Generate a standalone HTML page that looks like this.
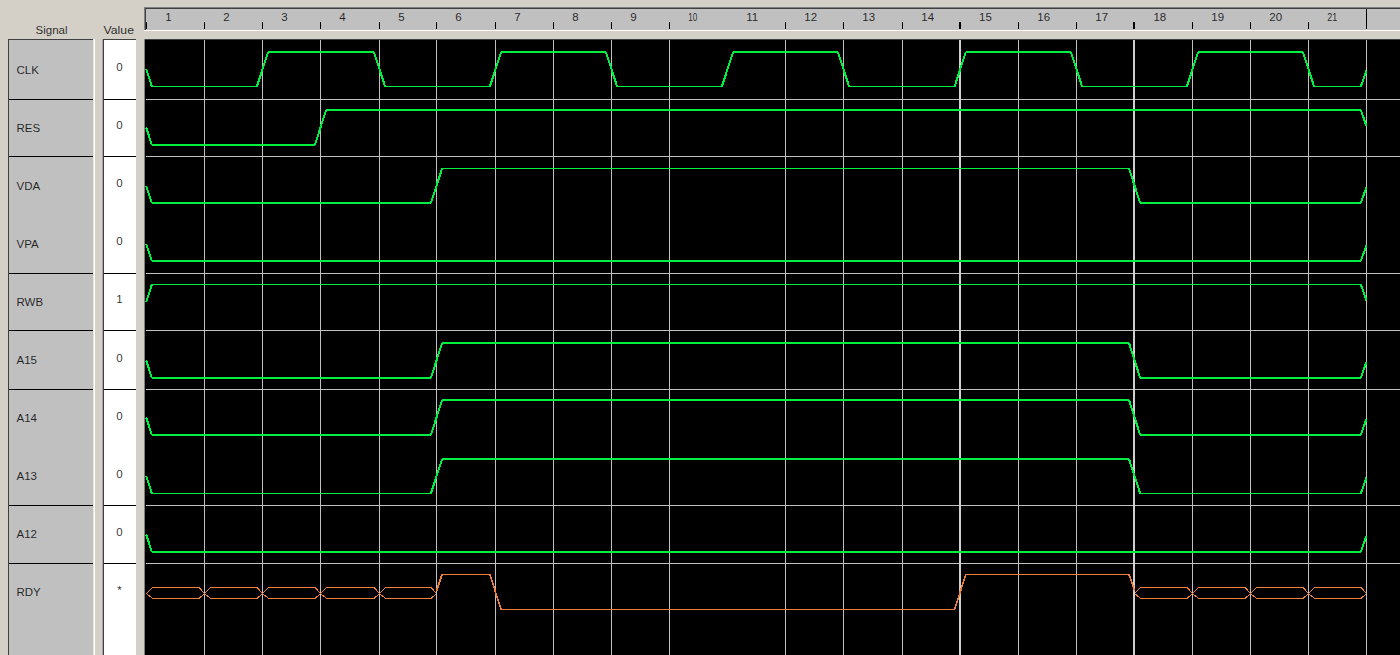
<!DOCTYPE html>
<html><head><meta charset="utf-8"><title>Waveform</title>
<style>
html,body{margin:0;padding:0;background:#d4d0c8;overflow:hidden}
svg{display:block}
text{font-family:"Liberation Sans",sans-serif;font-size:11.5px;fill:#000;fill-opacity:.82}
</style></head><body>
<svg width="1400" height="655" viewBox="0 0 1400 655">
<g shape-rendering="crispEdges">
<rect x="0" y="0" width="1400" height="655" fill="#d4d0c8"/>
<rect x="8" y="39" width="86" height="616" fill="#404040"/>
<rect x="9" y="40" width="84" height="615" fill="#c0c0c0"/>
<rect x="93" y="39" width="1" height="616" fill="#e8e6e0"/>
<rect x="94" y="39" width="1" height="616" fill="#ffffff"/>
<rect x="102" y="39" width="1" height="616" fill="#a8a49e"/>
<rect x="103" y="39" width="33" height="616" fill="#404040"/>
<rect x="104" y="40" width="32" height="615" fill="#ffffff"/>
<rect x="144" y="7" width="1256" height="1" fill="#808080"/>
<rect x="144" y="8" width="1256" height="1" fill="#404040"/>
<rect x="144" y="9" width="1256" height="21" fill="#c0c0c0"/>
<rect x="144" y="7" width="1" height="23" fill="#808080"/>
<rect x="145" y="8" width="1" height="22" fill="#404040"/>
<rect x="144" y="30" width="1256" height="1" fill="#ffffff"/>
<rect x="144" y="39" width="1256" height="616" fill="#808080"/>
<rect x="145" y="40" width="1255" height="615" fill="#000000"/>
<rect x="145" y="39" width="1255" height="1" fill="#404040"/>
<rect x="9" y="99" width="84" height="1" fill="#000000"/>
<rect x="104" y="99" width="32" height="1" fill="#000000"/>
<rect x="146" y="99" width="1254" height="1" fill="#c0c0c0"/>
<rect x="9" y="156" width="84" height="1" fill="#000000"/>
<rect x="104" y="156" width="32" height="1" fill="#000000"/>
<rect x="146" y="156" width="1254" height="1" fill="#c0c0c0"/>
<rect x="9" y="273" width="84" height="1" fill="#000000"/>
<rect x="104" y="273" width="32" height="1" fill="#000000"/>
<rect x="146" y="273" width="1254" height="1" fill="#c0c0c0"/>
<rect x="9" y="330" width="84" height="1" fill="#000000"/>
<rect x="104" y="330" width="32" height="1" fill="#000000"/>
<rect x="146" y="330" width="1254" height="1" fill="#c0c0c0"/>
<rect x="9" y="389" width="84" height="1" fill="#000000"/>
<rect x="104" y="389" width="32" height="1" fill="#000000"/>
<rect x="146" y="389" width="1254" height="1" fill="#c0c0c0"/>
<rect x="9" y="505" width="84" height="1" fill="#000000"/>
<rect x="104" y="505" width="32" height="1" fill="#000000"/>
<rect x="146" y="505" width="1254" height="1" fill="#c0c0c0"/>
<rect x="9" y="563" width="84" height="1" fill="#000000"/>
<rect x="104" y="563" width="32" height="1" fill="#000000"/>
<rect x="146" y="563" width="1254" height="1" fill="#c0c0c0"/>
<rect x="146" y="22" width="1" height="7" fill="#000000"/>
<rect x="204" y="40" width="1" height="615" fill="#c0c0c0"/>
<rect x="204" y="22" width="1" height="7" fill="#000000"/>
<rect x="262" y="40" width="1" height="615" fill="#c0c0c0"/>
<rect x="262" y="22" width="1" height="7" fill="#000000"/>
<rect x="320" y="40" width="1" height="615" fill="#c0c0c0"/>
<rect x="320" y="22" width="1" height="7" fill="#000000"/>
<rect x="379" y="40" width="1" height="615" fill="#c0c0c0"/>
<rect x="379" y="22" width="1" height="7" fill="#000000"/>
<rect x="436" y="40" width="1" height="615" fill="#c0c0c0"/>
<rect x="436" y="22" width="1" height="7" fill="#000000"/>
<rect x="495" y="40" width="1" height="615" fill="#c0c0c0"/>
<rect x="495" y="22" width="1" height="7" fill="#000000"/>
<rect x="553" y="40" width="1" height="615" fill="#c0c0c0"/>
<rect x="553" y="22" width="1" height="7" fill="#000000"/>
<rect x="611" y="40" width="1" height="615" fill="#c0c0c0"/>
<rect x="611" y="22" width="1" height="7" fill="#000000"/>
<rect x="669" y="40" width="1" height="615" fill="#c0c0c0"/>
<rect x="669" y="22" width="1" height="7" fill="#000000"/>
<rect x="785" y="40" width="1" height="615" fill="#c0c0c0"/>
<rect x="785" y="22" width="1" height="7" fill="#000000"/>
<rect x="843" y="40" width="1" height="615" fill="#c0c0c0"/>
<rect x="843" y="22" width="1" height="7" fill="#000000"/>
<rect x="902" y="40" width="1" height="615" fill="#c0c0c0"/>
<rect x="902" y="22" width="1" height="7" fill="#000000"/>
<rect x="959" y="40" width="2" height="615" fill="#d0d0d0"/>
<rect x="959" y="22" width="2" height="7" fill="#000000"/>
<rect x="1018" y="40" width="1" height="615" fill="#c0c0c0"/>
<rect x="1018" y="22" width="1" height="7" fill="#000000"/>
<rect x="1076" y="40" width="1" height="615" fill="#c0c0c0"/>
<rect x="1076" y="22" width="1" height="7" fill="#000000"/>
<rect x="1133" y="40" width="2" height="615" fill="#d0d0d0"/>
<rect x="1133" y="22" width="2" height="7" fill="#000000"/>
<rect x="1192" y="40" width="1" height="615" fill="#c0c0c0"/>
<rect x="1192" y="22" width="1" height="7" fill="#000000"/>
<rect x="1250" y="40" width="1" height="615" fill="#c0c0c0"/>
<rect x="1250" y="22" width="1" height="7" fill="#000000"/>
<rect x="1308" y="40" width="1" height="615" fill="#c0c0c0"/>
<rect x="1308" y="22" width="1" height="7" fill="#000000"/>
<rect x="1366" y="40" width="1" height="615" fill="#c0c0c0"/>
<rect x="1366" y="9" width="1" height="20" fill="#000000"/>
</g>
<g shape-rendering="crispEdges">
<line x1="146.2" y1="69.25" x2="151.9" y2="86.5" stroke="#00f040" stroke-width="2" stroke-linecap="butt"/>
<rect x="151.9" y="86" width="105" height="1" fill="#00f040"/>
<line x1="256.9" y1="86.5" x2="268.1" y2="52" stroke="#00f040" stroke-width="2" stroke-linecap="butt"/>
<rect x="268.1" y="51" width="105.8" height="2" fill="#00f040"/>
<line x1="373.9" y1="52" x2="385.1" y2="86.5" stroke="#00f040" stroke-width="2" stroke-linecap="butt"/>
<rect x="385.1" y="86" width="104.8" height="1" fill="#00f040"/>
<line x1="489.9" y1="86.5" x2="501.1" y2="52" stroke="#00f040" stroke-width="2" stroke-linecap="butt"/>
<rect x="501.1" y="51" width="104.8" height="2" fill="#00f040"/>
<line x1="605.9" y1="52" x2="617.1" y2="86.5" stroke="#00f040" stroke-width="2" stroke-linecap="butt"/>
<rect x="617.1" y="86" width="104.8" height="1" fill="#00f040"/>
<line x1="721.9" y1="86.5" x2="733.1" y2="52" stroke="#00f040" stroke-width="2" stroke-linecap="butt"/>
<rect x="733.1" y="51" width="104.8" height="2" fill="#00f040"/>
<line x1="837.9" y1="52" x2="849.1" y2="86.5" stroke="#00f040" stroke-width="2" stroke-linecap="butt"/>
<rect x="849.1" y="86" width="105.5" height="1" fill="#00f040"/>
<line x1="954.6" y1="86.5" x2="965.8" y2="52" stroke="#00f040" stroke-width="2" stroke-linecap="butt"/>
<rect x="965.8" y="51" width="105.1" height="2" fill="#00f040"/>
<line x1="1070.9" y1="52" x2="1082.1" y2="86.5" stroke="#00f040" stroke-width="2" stroke-linecap="butt"/>
<rect x="1082.1" y="86" width="104.8" height="1" fill="#00f040"/>
<line x1="1186.9" y1="86.5" x2="1198.1" y2="52" stroke="#00f040" stroke-width="2" stroke-linecap="butt"/>
<rect x="1198.1" y="51" width="104.8" height="2" fill="#00f040"/>
<line x1="1302.9" y1="52" x2="1314.1" y2="86.5" stroke="#00f040" stroke-width="2" stroke-linecap="butt"/>
<rect x="1314.1" y="86" width="46.7" height="1" fill="#00f040"/>
<line x1="1360.8" y1="86.5" x2="1366.5" y2="70.63" stroke="#00f040" stroke-width="2" stroke-linecap="butt"/>
<line x1="146.2" y1="127.5" x2="151.9" y2="145" stroke="#00f040" stroke-width="2" stroke-linecap="butt"/>
<rect x="151.9" y="144" width="163" height="2" fill="#00f040"/>
<line x1="314.9" y1="145" x2="326.1" y2="110" stroke="#00f040" stroke-width="2" stroke-linecap="butt"/>
<rect x="326.1" y="109" width="1034.7" height="2" fill="#00f040"/>
<line x1="1360.8" y1="110" x2="1366.5" y2="126.1" stroke="#00f040" stroke-width="2" stroke-linecap="butt"/>
<line x1="146.2" y1="185.75" x2="151.9" y2="203" stroke="#00f040" stroke-width="2" stroke-linecap="butt"/>
<rect x="151.9" y="202" width="279" height="2" fill="#00f040"/>
<line x1="430.9" y1="203" x2="442.1" y2="168.5" stroke="#00f040" stroke-width="2" stroke-linecap="butt"/>
<rect x="442.1" y="168" width="686.9" height="1" fill="#00f040"/>
<line x1="1129" y1="168.5" x2="1140.2" y2="203" stroke="#00f040" stroke-width="2" stroke-linecap="butt"/>
<rect x="1140.2" y="202" width="220.6" height="2" fill="#00f040"/>
<line x1="1360.8" y1="203" x2="1366.5" y2="187.13" stroke="#00f040" stroke-width="2" stroke-linecap="butt"/>
<line x1="146.2" y1="244" x2="151.9" y2="261" stroke="#00f040" stroke-width="2" stroke-linecap="butt"/>
<rect x="151.9" y="260" width="1208.9" height="2" fill="#00f040"/>
<line x1="1360.8" y1="261" x2="1366.5" y2="245.36" stroke="#00f040" stroke-width="2" stroke-linecap="butt"/>
<line x1="146.2" y1="301.75" x2="151.9" y2="284.5" stroke="#00f040" stroke-width="2" stroke-linecap="butt"/>
<rect x="151.9" y="284" width="1208.9" height="1" fill="#00f040"/>
<line x1="1360.8" y1="284.5" x2="1366.5" y2="300.37" stroke="#00f040" stroke-width="2" stroke-linecap="butt"/>
<line x1="146.2" y1="360.5" x2="151.9" y2="378" stroke="#00f040" stroke-width="2" stroke-linecap="butt"/>
<rect x="151.9" y="377" width="279" height="2" fill="#00f040"/>
<line x1="430.9" y1="378" x2="442.1" y2="343" stroke="#00f040" stroke-width="2" stroke-linecap="butt"/>
<rect x="442.1" y="342" width="686.9" height="2" fill="#00f040"/>
<line x1="1129" y1="343" x2="1140.2" y2="378" stroke="#00f040" stroke-width="2" stroke-linecap="butt"/>
<rect x="1140.2" y="377" width="220.6" height="2" fill="#00f040"/>
<line x1="1360.8" y1="378" x2="1366.5" y2="361.9" stroke="#00f040" stroke-width="2" stroke-linecap="butt"/>
<line x1="146.2" y1="417.5" x2="151.9" y2="435" stroke="#00f040" stroke-width="2" stroke-linecap="butt"/>
<rect x="151.9" y="434" width="279" height="2" fill="#00f040"/>
<line x1="430.9" y1="435" x2="442.1" y2="400" stroke="#00f040" stroke-width="2" stroke-linecap="butt"/>
<rect x="442.1" y="399" width="686.9" height="2" fill="#00f040"/>
<line x1="1129" y1="400" x2="1140.2" y2="435" stroke="#00f040" stroke-width="2" stroke-linecap="butt"/>
<rect x="1140.2" y="434" width="220.6" height="2" fill="#00f040"/>
<line x1="1360.8" y1="435" x2="1366.5" y2="418.9" stroke="#00f040" stroke-width="2" stroke-linecap="butt"/>
<line x1="146.2" y1="476.25" x2="151.9" y2="493.5" stroke="#00f040" stroke-width="2" stroke-linecap="butt"/>
<rect x="151.9" y="493" width="279" height="1" fill="#00f040"/>
<line x1="430.9" y1="493.5" x2="442.1" y2="459" stroke="#00f040" stroke-width="2" stroke-linecap="butt"/>
<rect x="442.1" y="458" width="686.9" height="2" fill="#00f040"/>
<line x1="1129" y1="459" x2="1140.2" y2="493.5" stroke="#00f040" stroke-width="2" stroke-linecap="butt"/>
<rect x="1140.2" y="493" width="220.6" height="1" fill="#00f040"/>
<line x1="1360.8" y1="493.5" x2="1366.5" y2="477.63" stroke="#00f040" stroke-width="2" stroke-linecap="butt"/>
<line x1="146.2" y1="534.5" x2="151.9" y2="552" stroke="#00f040" stroke-width="2" stroke-linecap="butt"/>
<rect x="151.9" y="551" width="1208.9" height="2" fill="#00f040"/>
<line x1="1360.8" y1="552" x2="1366.5" y2="535.9" stroke="#00f040" stroke-width="2" stroke-linecap="butt"/>
<polyline fill="none" stroke="#f08038" stroke-width="1" points="146.5,593.5 152.5,587.5 199,587.5 204.5,593.5"/>
<polyline fill="none" stroke="#f08038" stroke-width="1" points="146.5,593.5 152.5,598.5 199,598.5 204.5,593.5"/>
<polyline fill="none" stroke="#f08038" stroke-width="1" points="204.5,593.5 210.5,587.5 257,587.5 262.5,593.5"/>
<polyline fill="none" stroke="#f08038" stroke-width="1" points="204.5,593.5 210.5,598.5 257,598.5 262.5,593.5"/>
<polyline fill="none" stroke="#f08038" stroke-width="1" points="262.5,593.5 268.5,587.5 315,587.5 320.5,593.5"/>
<polyline fill="none" stroke="#f08038" stroke-width="1" points="262.5,593.5 268.5,598.5 315,598.5 320.5,593.5"/>
<polyline fill="none" stroke="#f08038" stroke-width="1" points="320.5,593.5 326.5,587.5 374,587.5 379.5,593.5"/>
<polyline fill="none" stroke="#f08038" stroke-width="1" points="320.5,593.5 326.5,598.5 374,598.5 379.5,593.5"/>
<polyline fill="none" stroke="#f08038" stroke-width="1" points="379.5,593.5 385.5,587.5 431,587.5 436.5,593.5"/>
<polyline fill="none" stroke="#f08038" stroke-width="1" points="379.5,593.5 385.5,598.5 431,598.5 436.5,593.5"/>
<line x1="436.5" y1="591" x2="442" y2="574.5" stroke="#f08038" stroke-width="1.6" stroke-linecap="butt"/>
<rect x="442" y="574" width="47.9" height="1" fill="#f08038"/>
<line x1="489.9" y1="574.5" x2="501.1" y2="609.5" stroke="#f08038" stroke-width="1.6" stroke-linecap="butt"/>
<rect x="501.1" y="609" width="453.5" height="1" fill="#f08038"/>
<line x1="954.6" y1="609.5" x2="965.8" y2="574.5" stroke="#f08038" stroke-width="1.6" stroke-linecap="butt"/>
<rect x="965.8" y="574" width="163.2" height="1" fill="#f08038"/>
<line x1="1129" y1="574.5" x2="1134.6" y2="591" stroke="#f08038" stroke-width="1.6" stroke-linecap="butt"/>
<polyline fill="none" stroke="#f08038" stroke-width="1" points="1134.6,593.5 1140.6,587.5 1187,587.5 1192.5,593.5"/>
<polyline fill="none" stroke="#f08038" stroke-width="1" points="1134.6,593.5 1140.6,598.5 1187,598.5 1192.5,593.5"/>
<polyline fill="none" stroke="#f08038" stroke-width="1" points="1192.5,593.5 1198.5,587.5 1245,587.5 1250.5,593.5"/>
<polyline fill="none" stroke="#f08038" stroke-width="1" points="1192.5,593.5 1198.5,598.5 1245,598.5 1250.5,593.5"/>
<polyline fill="none" stroke="#f08038" stroke-width="1" points="1250.5,593.5 1256.5,587.5 1303,587.5 1308.5,593.5"/>
<polyline fill="none" stroke="#f08038" stroke-width="1" points="1250.5,593.5 1256.5,598.5 1303,598.5 1308.5,593.5"/>
<polyline fill="none" stroke="#f08038" stroke-width="1" points="1308.5,593.5 1314.5,587.5 1361,587.5 1366.5,593.5"/>
<polyline fill="none" stroke="#f08038" stroke-width="1" points="1308.5,593.5 1314.5,598.5 1361,598.5 1366.5,593.5"/>
</g>
<g>
<text x="35.5" y="33.7" font-size="12" textLength="32" lengthAdjust="spacingAndGlyphs">Signal</text>
<text x="103.5" y="33.7" font-size="12" textLength="30.5" lengthAdjust="spacingAndGlyphs">Value</text>
<text x="16.5" y="73.5">CLK</text>
<text x="119.5" y="71" text-anchor="middle">0</text>
<text x="16.5" y="131.6">RES</text>
<text x="119.5" y="129.1" text-anchor="middle">0</text>
<text x="16.5" y="189.7">VDA</text>
<text x="119.5" y="187.2" text-anchor="middle">0</text>
<text x="16.5" y="247.8">VPA</text>
<text x="119.5" y="245.3" text-anchor="middle">0</text>
<text x="16.5" y="305.9">RWB</text>
<text x="119.5" y="303.4" text-anchor="middle">1</text>
<text x="16.5" y="364">A15</text>
<text x="119.5" y="361.5" text-anchor="middle">0</text>
<text x="16.5" y="422.1">A14</text>
<text x="119.5" y="419.6" text-anchor="middle">0</text>
<text x="16.5" y="480.2">A13</text>
<text x="119.5" y="477.7" text-anchor="middle">0</text>
<text x="16.5" y="538.3">A12</text>
<text x="119.5" y="535.8" text-anchor="middle">0</text>
<text x="16.5" y="596.4">RDY</text>
<text x="119.5" y="593.9" text-anchor="middle">*</text>
<text x="165.3" y="21">1</text>
<text x="223.3" y="21">2</text>
<text x="281.3" y="21">3</text>
<text x="339.3" y="21">4</text>
<text x="398.3" y="21">5</text>
<text x="455.3" y="21">6</text>
<text x="514.3" y="21">7</text>
<text x="572.3" y="21">8</text>
<text x="630.3" y="21">9</text>
<text x="688.3" y="21" textLength="9" lengthAdjust="spacingAndGlyphs">10</text>
<text x="746.3" y="21">11</text>
<text x="804.3" y="21">12</text>
<text x="862.3" y="21">13</text>
<text x="921.3" y="21">14</text>
<text x="979" y="21">15</text>
<text x="1037.3" y="21">16</text>
<text x="1095.3" y="21">17</text>
<text x="1153.4" y="21">18</text>
<text x="1211.3" y="21">19</text>
<text x="1269.3" y="21">20</text>
<text x="1327.3" y="21" textLength="10" lengthAdjust="spacingAndGlyphs">21</text>
</g>
</svg>
</body></html>
